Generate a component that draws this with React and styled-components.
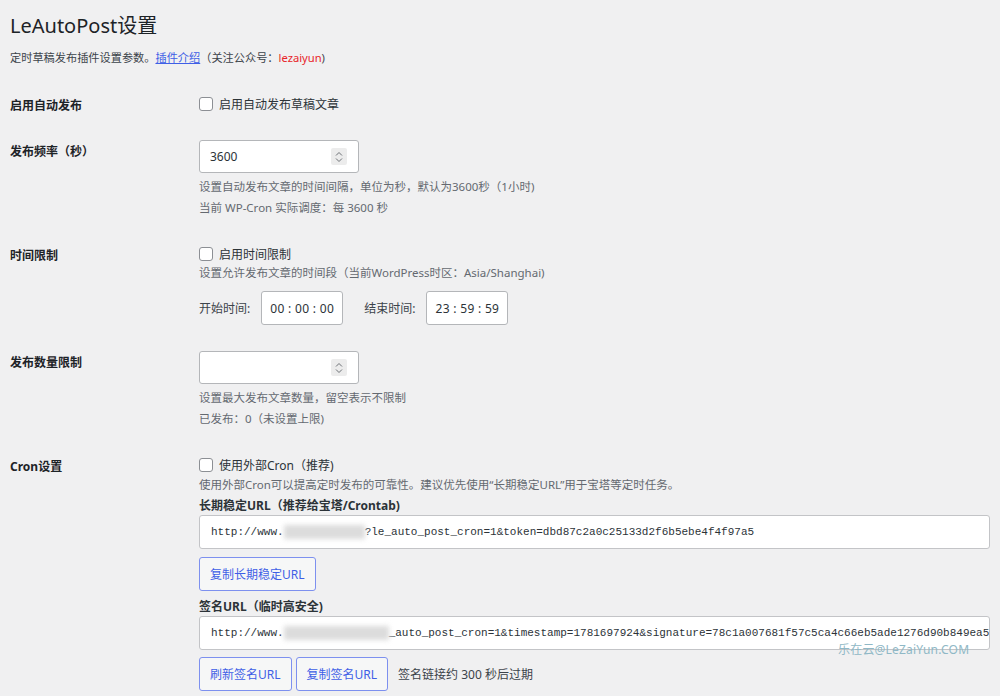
import React from "react";
import styled, { createGlobalStyle } from "styled-components";

const GlobalStyle = createGlobalStyle`
  html, body {
    margin: 0;
    background: #f0f0f1;
  }
  body {
    font-family: "Noto Sans", "Noto Sans CJK SC", sans-serif;
    color: #1d2327;
  }
  * {
    box-sizing: border-box;
  }
`;

const blue = "#3f5fe6";

const Page = styled.div`
  position: relative;
  padding: 14px 10px 0 10px;
  min-height: 696px;
`;

const Title = styled.h1`
  margin: 0;
  font-size: 20px;
  line-height: 24px;
  font-weight: 400;
  color: #1d2327;
`;

const Intro = styled.p`
  margin: 11px 0 14px;
  font-size: 11.2px;
  line-height: 18px;
  color: #3c434a;

  a {
    color: ${blue};
    text-decoration: underline;
  }
  .red {
    color: #e8262a;
  }
`;

const Row = styled.div`
  display: grid;
  grid-template-columns: 189px 1fr;
`;

const Th = styled.div`
  padding-top: 17px;
  font-size: 12px;
  line-height: 15.6px;
  font-weight: 700;
  color: #1d2327;
`;

const Td = styled.div`
  padding: 13px 0;
  min-width: 0;
`;

const CheckLine = styled.label`
  display: flex;
  align-items: center;
  gap: 6px;
  height: 20px;
  font-size: 12px;
  color: #2c3338;
`;

const Checkbox = styled.span`
  width: 14px;
  height: 14px;
  border: 1px solid #8c8f94;
  border-radius: 3px;
  background: #fff;
  flex: none;
`;

const Desc = styled.p`
  margin: ${(p) => p.$mt || 0}px 0 0;
  font-size: 11.5px;
  line-height: ${(p) => p.$lh || 21}px;
  color: #646970;
`;

const NumberBox = styled.div`
  display: flex;
  align-items: center;
  justify-content: space-between;
  width: 160px;
  height: 33px;
  padding: 0 11px 0 10px;
  background: #fff;
  border: 1px solid #b4b6b9;
  border-radius: 3px;
  font-size: 12px;
  color: #2c3338;
`;

const Spinner = styled.span`
  display: flex;
  align-items: center;
  justify-content: center;
  width: 16px;
  height: 17px;
  background: #ececec;
  border-radius: 2px;
`;

const TimeRow = styled.div`
  display: flex;
  align-items: center;
  margin-top: 9px;
`;

const TimeLabel = styled.span`
  font-size: 12px;
  color: #3c434a;
  margin-right: 11px;
`;

const TimeBox = styled.div`
  display: flex;
  align-items: center;
  justify-content: center;
  width: 82px;
  height: 34px;
  margin-right: ${(p) => p.$mr || 0}px;
  background: #fff;
  border: 1px solid #b4b6b9;
  border-radius: 3px;
  font-size: 12px;
  letter-spacing: 0.3px;
  color: #2c3338;
`;

const SubLabel = styled.div`
  margin-top: ${(p) => p.$mt}px;
  font-size: 12px;
  line-height: 18px;
  font-weight: 700;
  color: #2c3338;
`;

const UrlBox = styled.div`
  display: flex;
  align-items: center;
  height: 34px;
  padding: 0 11px;
  background: #fff;
  border: 1px solid #c3c4c7;
  border-radius: 3px;
  font-family: "Liberation Mono", "DejaVu Sans Mono", monospace;
  font-size: 11px;
  color: #2c3338;
  white-space: nowrap;
  overflow: hidden;
`;

const Blur = styled.span`
  display: inline-block;
  flex: none;
  width: ${(p) => p.$w}px;
  height: 14px;
  background: #dcdcdc;
  filter: blur(2.5px);
`;

const ButtonRow = styled.div`
  display: flex;
  align-items: center;
  gap: 4px;
  margin-top: ${(p) => p.$mt}px;
`;

const Button = styled.button`
  height: 34px;
  padding: 0 10px;
  background: #f6f7f7;
  border: 1px solid #7d90ef;
  border-radius: 3px;
  font-family: inherit;
  font-size: 12px;
  color: ${blue};
  cursor: pointer;
`;

const Note = styled.span`
  margin-left: 6px;
  font-size: 12px;
  color: #3c434a;
`;

const Watermark = styled.div`
  position: absolute;
  left: 838px;
  top: 640px;
  font-size: 12px;
  color: #8fb8c6;
  letter-spacing: 0.2px;
`;

const SpinIcon = () => (
  <svg width="8" height="12" viewBox="0 0 8 12">
    <path d="M1 4.5 L4 1.5 L7 4.5 M1 7.5 L4 10.5 L7 7.5" fill="none" stroke="#6c7075" strokeWidth="1" />
  </svg>
);

const App = () => {
  return (
    <Page>
      <GlobalStyle />
      <Title>LeAutoPost设置</Title>
      <Intro>
        定时草稿发布插件设置参数。<a href="#">插件介绍</a>（关注公众号：
        <span className="red">lezaiyun</span>)
      </Intro>

      <Row>
        <Th>启用自动发布</Th>
        <Td>
          <CheckLine>
            <Checkbox />
            启用自动发布草稿文章
          </CheckLine>
        </Td>
      </Row>

      <Row>
        <Th>发布频率（秒）</Th>
        <Td>
          <NumberBox>
            3600
            <Spinner>
              <SpinIcon />
            </Spinner>
          </NumberBox>
          <Desc $mt={3}>设置自动发布文章的时间间隔，单位为秒，默认为3600秒（1小时)</Desc>
          <Desc>当前 WP-Cron 实际调度：每 3600 秒</Desc>
        </Td>
      </Row>

      <Row>
        <Th>时间限制</Th>
        <Td>
          <CheckLine>
            <Checkbox />
            启用时间限制
          </CheckLine>
          <Desc $lh={18}>设置允许发布文章的时间段（当前WordPress时区：Asia/Shanghai)</Desc>
          <TimeRow>
            <TimeLabel>开始时间:</TimeLabel>
            <TimeBox $mr={21}>00 : 00 : 00</TimeBox>
            <TimeLabel>结束时间:</TimeLabel>
            <TimeBox>23 : 59 : 59</TimeBox>
          </TimeRow>
        </Td>
      </Row>

      <Row>
        <Th>发布数量限制</Th>
        <Td>
          <NumberBox>
            <span />
            <Spinner>
              <SpinIcon />
            </Spinner>
          </NumberBox>
          <Desc $mt={3}>设置最大发布文章数量，留空表示不限制</Desc>
          <Desc>已发布：0（未设置上限)</Desc>
        </Td>
      </Row>

      <Row>
        <Th>Cron设置</Th>
        <Td>
          <CheckLine>
            <Checkbox />
            使用外部Cron（推荐)
          </CheckLine>
          <Desc $lh={20}>
            使用外部Cron可以提高定时发布的可靠性。建议优先使用“长期稳定URL”用于宝塔等定时任务。
          </Desc>
          <SubLabel $mt={2}>长期稳定URL（推荐给宝塔/Crontab)</SubLabel>
          <UrlBox>
            http://www.
            <Blur $w={81} />
            ?le_auto_post_cron=1&amp;token=dbd87c2a0c25133d2f6b5ebe4f4f97a5
          </UrlBox>
          <ButtonRow $mt={8}>
            <Button>复制长期稳定URL</Button>
          </ButtonRow>
          <SubLabel $mt={7}>签名URL（临时高安全)</SubLabel>
          <UrlBox>
            http://www.
            <Blur $w={105} />
            _auto_post_cron=1&amp;timestamp=1781697924&amp;signature=78c1a007681f57c5ca4c66eb5ade1276d90b849ea5f3c
          </UrlBox>
          <ButtonRow $mt={7}>
            <Button>刷新签名URL</Button>
            <Button>复制签名URL</Button>
            <Note>签名链接约 300 秒后过期</Note>
          </ButtonRow>
        </Td>
      </Row>

      <Watermark>乐在云@LeZaiYun.COM</Watermark>
    </Page>
  );
};

export default App;
